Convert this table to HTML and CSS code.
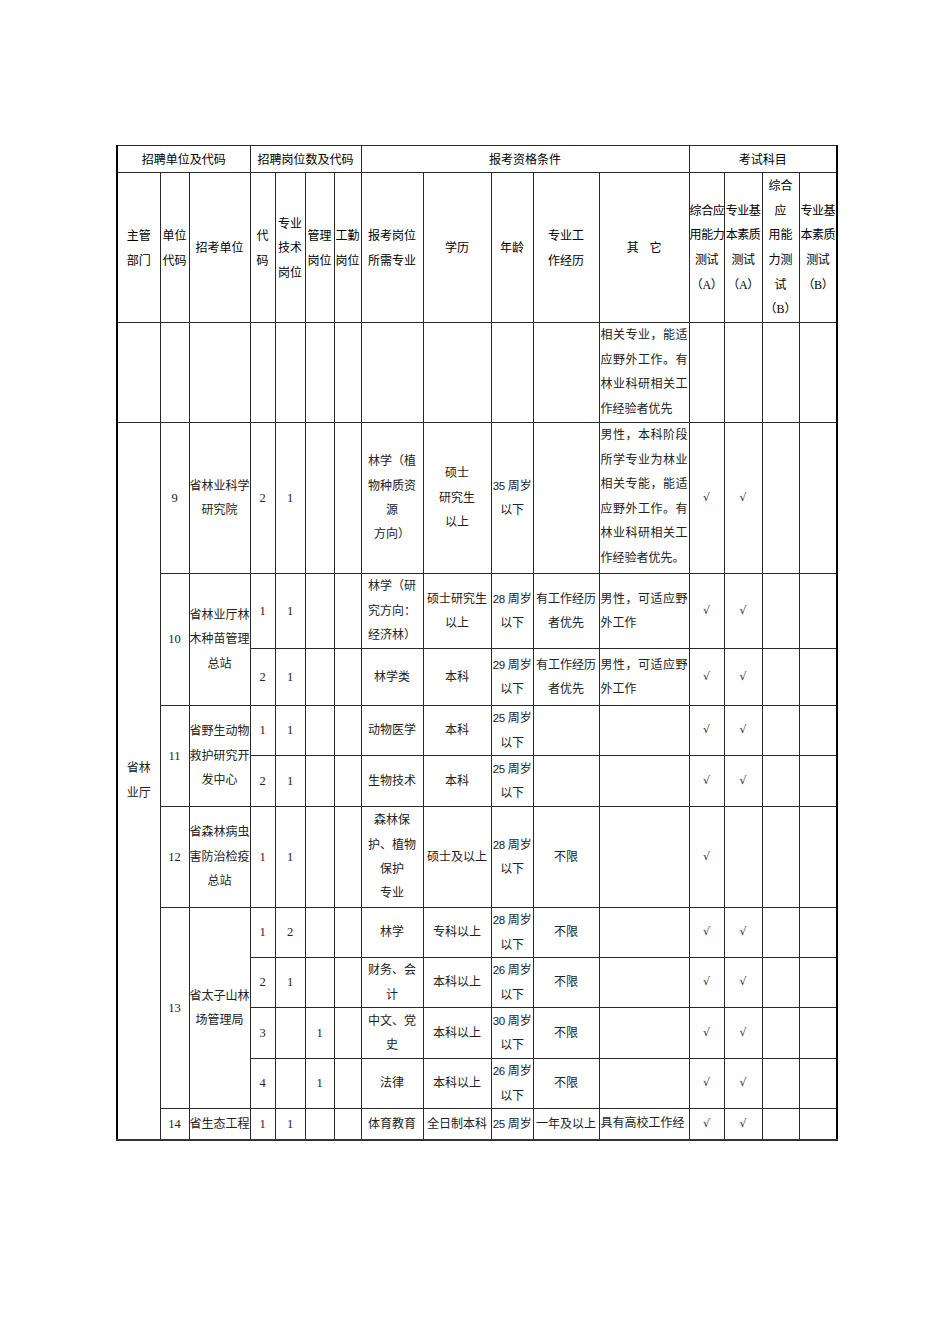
FILE: index.html
```html
<!DOCTYPE html>
<html lang="zh-CN">
<head>
<meta charset="utf-8">
<title>招聘岗位表</title>
<link rel="stylesheet" href="styles.css">
</head>
<body>
<table class="grid">
  <colgroup>
    <col class="c1"><col class="c2"><col class="c3"><col class="c4"><col class="c5"><col class="c6"><col class="c7"><col class="c8">
    <col class="c9"><col class="c10"><col class="c11"><col class="c12"><col class="c13"><col class="c14"><col class="c15"><col class="c16">
  </colgroup>
  <thead>
    <tr class="h1">
      <th colspan="3">招聘单位及代码</th>
      <th colspan="4">招聘岗位数及代码</th>
      <th colspan="5">报考资格条件</th>
      <th colspan="4">考试科目</th>
    </tr>
    <tr class="h2">
      <th>主管<br>部门</th>
      <th>单位<br>代码</th>
      <th>招考单位</th>
      <th>代<br>码</th>
      <th>专业<br>技术<br>岗位</th>
      <th>管理<br>岗位</th>
      <th>工勤<br>岗位</th>
      <th>报考岗位<br>所需专业</th>
      <th>学历</th>
      <th>年龄</th>
      <th>专业工<br>作经历</th>
      <th>其&nbsp;&nbsp;&nbsp;&nbsp;它</th>
      <th class="tight">综合应<br>用能力<br>测试<br><span class="ser">（A）</span></th>
      <th class="tight">专业基<br>本素质<br>测试<br><span class="ser">（A）</span></th>
      <th>综合<br>应<br>用能<br>力测<br>试<br><span class="ser">（B）</span></th>
      <th class="tight">专业基<br>本素质<br>测试<br><span class="ser">（B）</span></th>
    </tr>
  </thead>
  <tbody>
    <tr class="r100">
      <td></td><td></td><td></td><td></td><td></td><td></td><td></td><td></td>
      <td></td><td></td><td></td>
      <td class="note">相关专业，能适应野外工作。有林业科研相关工作经验者优先</td>
      <td></td><td></td><td></td><td></td>
    </tr>
    <tr class="r151">
      <td rowspan="14">省林<br>业厅</td>
      <td class="num">9</td>
      <td>省林业科学<br>研究院</td>
      <td class="num">2</td>
      <td class="num">1</td>
      <td></td><td></td>
      <td>林学（植<br>物种质资<br>源<br>方向）</td>
      <td>硕士<br>研究生<br>以上</td>
      <td class="age"><span class="d">35</span> 周岁<br>以下</td>
      <td></td>
      <td class="note">男性，本科阶段所学专业为林业相关专能，能适应野外工作。有林业科研相关工作经验者优先。</td>
      <td class="chk">√</td><td class="chk">√</td><td></td><td></td>
    </tr>
    <tr class="r75">
      <td class="num" rowspan="2">10</td>
      <td rowspan="2">省林业厅林<br>木种苗管理<br>总站</td>
      <td class="num">1</td>
      <td class="num">1</td>
      <td></td><td></td>
      <td>林学（研<br>究方向：<br>经济林）</td>
      <td>硕士研究生<br>以上</td>
      <td class="age"><span class="d">28</span> 周岁<br>以下</td>
      <td>有工作经历<br>者优先</td>
      <td class="note mid">男性，可适应野外工作</td>
      <td class="chk">√</td><td class="chk">√</td><td></td><td></td>
    </tr>
    <tr class="r57">
      <td class="num">2</td>
      <td class="num">1</td>
      <td></td><td></td>
      <td>林学类</td>
      <td>本科</td>
      <td class="age"><span class="d">29</span> 周岁<br>以下</td>
      <td>有工作经历<br>者优先</td>
      <td class="note mid">男性，可适应野外工作</td>
      <td class="chk">√</td><td class="chk">√</td><td></td><td></td>
    </tr>
    <tr class="r50">
      <td class="num" rowspan="2">11</td>
      <td rowspan="2">省野生动物<br>救护研究开<br>发中心</td>
      <td class="num">1</td>
      <td class="num">1</td>
      <td></td><td></td>
      <td>动物医学</td>
      <td>本科</td>
      <td class="age"><span class="d">25</span> 周岁<br>以下</td>
      <td></td>
      <td class="note"></td>
      <td class="chk">√</td><td class="chk">√</td><td></td><td></td>
    </tr>
    <tr class="r51">
      <td class="num">2</td>
      <td class="num">1</td>
      <td></td><td></td>
      <td>生物技术</td>
      <td>本科</td>
      <td class="age"><span class="d">25</span> 周岁<br>以下</td>
      <td></td>
      <td class="note"></td>
      <td class="chk">√</td><td class="chk">√</td><td></td><td></td>
    </tr>
    <tr class="r101">
      <td class="num">12</td>
      <td>省森林病虫<br>害防治检疫<br>总站</td>
      <td class="num">1</td>
      <td class="num">1</td>
      <td></td><td></td>
      <td>森林保<br>护、植物<br>保护<br>专业</td>
      <td>硕士及以上</td>
      <td class="age"><span class="d">28</span> 周岁<br>以下</td>
      <td>不限</td>
      <td class="note"></td>
      <td class="chk">√</td><td></td><td></td><td></td>
    </tr>
    <tr class="r50">
      <td class="num" rowspan="4">13</td>
      <td rowspan="4">省太子山林<br>场管理局</td>
      <td class="num">1</td>
      <td class="num">2</td>
      <td></td><td></td>
      <td>林学</td>
      <td>专科以上</td>
      <td class="age"><span class="d">28</span> 周岁<br>以下</td>
      <td>不限</td>
      <td class="note"></td>
      <td class="chk">√</td><td class="chk">√</td><td></td><td></td>
    </tr>
    <tr class="r50">
      <td class="num">2</td>
      <td class="num">1</td>
      <td></td><td></td>
      <td>财务、会<br>计</td>
      <td>本科以上</td>
      <td class="age"><span class="d">26</span> 周岁<br>以下</td>
      <td>不限</td>
      <td class="note"></td>
      <td class="chk">√</td><td class="chk">√</td><td></td><td></td>
    </tr>
    <tr class="r51">
      <td class="num">3</td>
      <td></td>
      <td class="num">1</td>
      <td></td>
      <td>中文、党<br>史</td>
      <td>本科以上</td>
      <td class="age"><span class="d">30</span> 周岁<br>以下</td>
      <td>不限</td>
      <td class="note"></td>
      <td class="chk">√</td><td class="chk">√</td><td></td><td></td>
    </tr>
    <tr class="r50">
      <td class="num">4</td>
      <td></td>
      <td class="num">1</td>
      <td></td>
      <td>法律</td>
      <td>本科以上</td>
      <td class="age"><span class="d">26</span> 周岁<br>以下</td>
      <td>不限</td>
      <td class="note"></td>
      <td class="chk">√</td><td class="chk">√</td><td></td><td></td>
    </tr>
    <tr class="r31">
      <td class="num">14</td>
      <td>省生态工程</td>
      <td class="num">1</td>
      <td class="num">1</td>
      <td></td><td></td>
      <td>体育教育</td>
      <td>全日制本科</td>
      <td class="age"><span class="d">25</span> 周岁</td>
      <td>一年及以上</td>
      <td class="note">具有高校工作经</td>
      <td class="chk">√</td><td class="chk">√</td><td></td><td></td>
    </tr>
  </tbody>
</table>
</body>
</html>
```

FILE: styles.css
```css
html, body {
  margin: 0;
  padding: 0;
  background: #ffffff;
}

body {
  font-family: "Liberation Serif", "Noto Sans CJK SC", serif;
  color: #222;
}

.grid {
  margin: 145px 0 0 116px;
  width: 720px;
  table-layout: fixed;
  border-collapse: collapse;
  border-left: 2px solid #000;
  border-right: 2px solid #000;
  border-top: 1px solid #000;
  border-bottom: 2px solid #333;
}

.c1 { width: 43px; }
.c2 { width: 29px; }
.c3 { width: 61px; }
.c4 { width: 25px; }
.c5 { width: 30px; }
.c6 { width: 29px; }
.c7 { width: 27px; }
.c8 { width: 62px; }
.c9 { width: 68px; }
.c10 { width: 42px; }
.c11 { width: 66px; }
.c12 { width: 90px; }
.c13 { width: 35px; }
.c14 { width: 38px; }
.c15 { width: 37px; }
.c16 { width: 38px; }

.grid th,
.grid td {
  border: 1px solid #2a2a2a;
  padding: 0;
  text-align: center;
  vertical-align: middle;
  font-size: 12px;
  line-height: 24.4px;
  white-space: nowrap;
  overflow: visible;
}

.grid th {
  font-family: "Noto Sans CJK SC", "Liberation Sans", sans-serif;
  font-weight: normal;
  color: #000;
  line-height: 24.6px;
}

.grid th .ser {
  font-family: "Liberation Serif", "Noto Sans CJK SC", serif;
}

.grid th.tight {
  letter-spacing: -0.4px;
}

.h1 { height: 27px; }
.grid .h1 th { line-height: 16px; }
.h2 { height: 150px; }

.r100 { height: 100px; }
.r151 { height: 151px; }
.r75 { height: 75px; }
.r57 { height: 57px; }
.r50 { height: 50px; }
.r51 { height: 51px; }
.r101 { height: 101px; }
.r31 { height: 31px; }

.grid td.note {
  white-space: normal;
  text-align: justify;
  vertical-align: top;
  padding: 0 1px;
  line-height: 24.6px;
}

.grid td.note.mid {
  vertical-align: middle;
  line-height: 24.4px;
}

.grid tr.r31 td.note {
  vertical-align: middle;
  white-space: nowrap;
  overflow: hidden;
}

.grid td.num {
  font-size: 12.5px;
}

.grid td.age {
  letter-spacing: -0.2px;
}

.grid td.age .d {
  font-family: "Liberation Sans", sans-serif;
  font-size: 11.5px;
}

.grid td.chk {
  font-family: "DejaVu Serif", serif;
  font-size: 11px;
  color: #333;
}

.grid td.note:empty { vertical-align: middle; }
```
